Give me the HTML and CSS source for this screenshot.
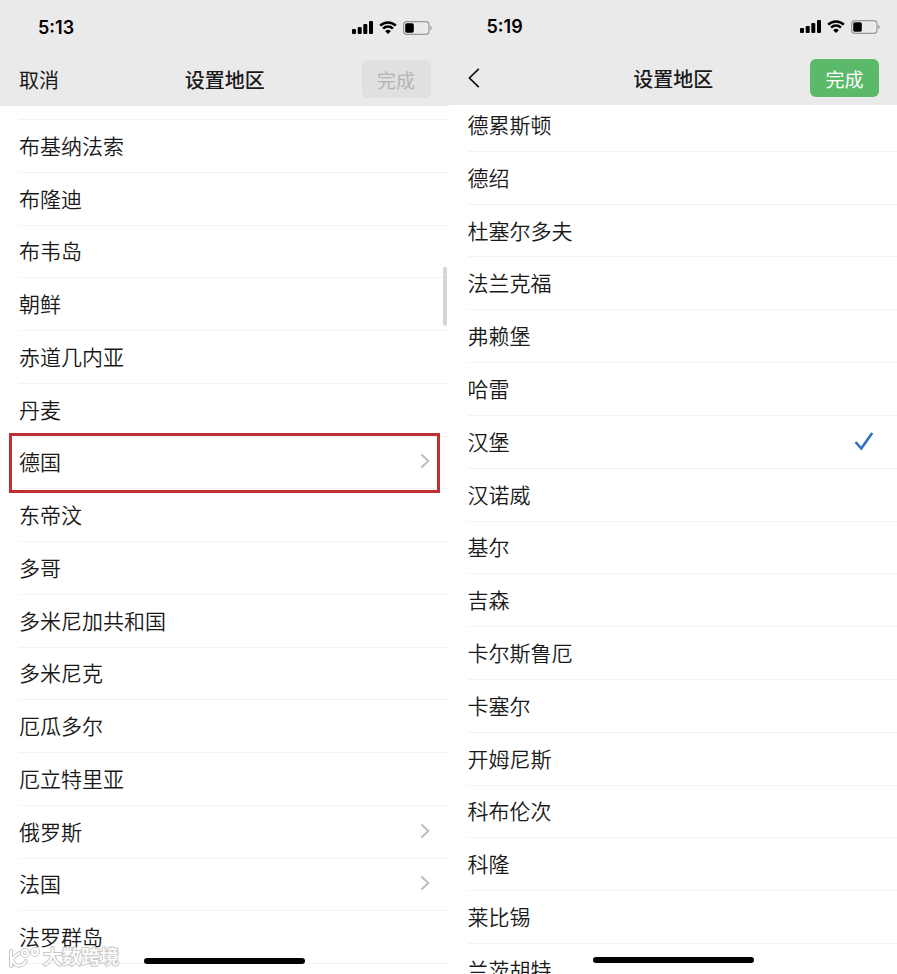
FILE: index.html
```html
<!DOCTYPE html>
<html lang="zh-CN">
<head>
    <meta charset="UTF-8">
    <meta name="viewport" content="width=device-width, initial-scale=1.0">
    <title>设置地区</title>
    <link rel="stylesheet" href="styles.css">
</head>

<body>

    <!-- shared icons -->
    <svg class="sprite" aria-hidden="true">
        <symbol id="signal" viewBox="0 0 21 13">
            <rect x="0" y="8" width="4" height="5" rx="1"/>
            <rect x="5.7" y="6" width="4" height="7" rx="1"/>
            <rect x="11.3" y="3" width="4" height="10" rx="1"/>
            <rect x="17" y="0" width="4" height="13" rx="1"/>
        </symbol>
        <symbol id="wifi" viewBox="0 0 18 13">
            <path d="M1.2 4.6a11.2 11.2 0 0 1 15.6 0M4.1 7.6a7 7 0 0 1 9.8 0" fill="none" stroke="#000" stroke-width="2.5"/>
            <path d="M9 13 6.2 10.2a4 4 0 0 1 5.6 0z"/>
        </symbol>
        <symbol id="battery" viewBox="0 0 29 14">
            <rect x=".6" y=".6" width="25.4" height="12.8" rx="3.4" fill="none" stroke="#999" stroke-width="1.2"/>
            <rect x="2.2" y="2.3" width="8.6" height="9.4" rx="1.6"/>
            <path d="M27.3 4.8c1.8.7 1.8 3.7 0 4.4z" fill="#999"/>
        </symbol>
        <symbol id="chevron" viewBox="0 0 10 16">
            <path d="M1.5 1.5 8.3 8l-6.8 6.5" fill="none" stroke="#bcbcbc" stroke-width="1.9"/>
        </symbol>
    </svg>

    <main class="screens">

        <section class="screen">
            <header class="top">
                <div class="status">
                    <span class="time">5:13</span>
                    <svg class="signal"><use href="#signal"/></svg>
                    <svg class="wifi"><use href="#wifi"/></svg>
                    <svg class="battery"><use href="#battery"/></svg>
                </div>
                <div class="nav">
                    <button class="cancel" type="button">取消</button>
                    <h1>设置地区</h1>
                    <button class="done" type="button" disabled>完成</button>
                </div>
            </header>
            <ul class="list countries">
                <li class="part"></li>
                <li><button type="button">布基纳法索</button></li>
                <li><button type="button">布隆迪</button></li>
                <li><button type="button">布韦岛</button></li>
                <li><button type="button">朝鲜</button></li>
                <li><button type="button">赤道几内亚</button></li>
                <li><button type="button">丹麦</button></li>
                <li class="marked"><button type="button">德国<svg class="chevron"><use href="#chevron"/></svg></button></li>
                <li><button type="button">东帝汶</button></li>
                <li><button type="button">多哥</button></li>
                <li><button type="button">多米尼加共和国</button></li>
                <li><button type="button">多米尼克</button></li>
                <li><button type="button">厄瓜多尔</button></li>
                <li><button type="button">厄立特里亚</button></li>
                <li><button type="button">俄罗斯<svg class="chevron"><use href="#chevron"/></svg></button></li>
                <li><button type="button">法国<svg class="chevron"><use href="#chevron"/></svg></button></li>
                <li><button type="button">法罗群岛</button></li>
                <li class="part last"></li>
            </ul>
            <div class="scrollbar"></div>
            <div class="home-bar"></div>
            <div class="watermark">
                <svg viewBox="0 0 34 22" aria-hidden="true">
                    <g fill="none" stroke-linecap="round" stroke-linejoin="round">
                        <path class="mark-edge" d="M4 4v15M12 6 5 12c2 8 10 9 14 2M15 6a3 3 0 1 0 6 0 3 3 0 1 0-6 0M25 5a3 3 0 1 0 6 0 3 3 0 1 0-6 0"/>
                        <path class="mark-fill" d="M4 4v15M12 6 5 12c2 8 10 9 14 2M15 6a3 3 0 1 0 6 0 3 3 0 1 0-6 0M25 5a3 3 0 1 0 6 0 3 3 0 1 0-6 0"/>
                    </g>
                </svg>
                <span>大数跨境</span>
            </div>
        </section>

        <section class="screen city">
            <header class="top">
                <div class="status">
                    <span class="time">5:19</span>
                    <svg class="signal"><use href="#signal"/></svg>
                    <svg class="wifi"><use href="#wifi"/></svg>
                    <svg class="battery"><use href="#battery"/></svg>
                </div>
                <div class="nav">
                    <button class="back" type="button" aria-label="返回">
                        <svg viewBox="0 0 12 20"><path d="M10.8.8 1.4 10l9.4 9.2" fill="none" stroke="#111" stroke-width="1.7"/></svg>
                    </button>
                    <h1>设置地区</h1>
                    <button class="done" type="button">完成</button>
                </div>
            </header>
            <ul class="list cities">
                <li><label>德累斯顿<input type="radio" name="city"></label></li>
                <li><label>德绍<input type="radio" name="city"></label></li>
                <li><label>杜塞尔多夫<input type="radio" name="city"></label></li>
                <li><label>法兰克福<input type="radio" name="city"></label></li>
                <li><label>弗赖堡<input type="radio" name="city"></label></li>
                <li><label>哈雷<input type="radio" name="city"></label></li>
                <li><label>汉堡<input type="radio" name="city" checked><svg class="check" viewBox="0 0 20 20"><path d="m1.5 11 5.8 6.5L18.2 2" fill="none" stroke="#2f6fc4" stroke-width="2.6"/></svg></label></li>
                <li><label>汉诺威<input type="radio" name="city"></label></li>
                <li><label>基尔<input type="radio" name="city"></label></li>
                <li><label>吉森<input type="radio" name="city"></label></li>
                <li><label>卡尔斯鲁厄<input type="radio" name="city"></label></li>
                <li><label>卡塞尔<input type="radio" name="city"></label></li>
                <li><label>开姆尼斯<input type="radio" name="city"></label></li>
                <li><label>科布伦次<input type="radio" name="city"></label></li>
                <li><label>科隆<input type="radio" name="city"></label></li>
                <li><label>莱比锡<input type="radio" name="city"></label></li>
                <li class="last"><label>兰茨胡特<input type="radio" name="city"></label></li>
            </ul>
            <div class="home-bar"></div>
        </section>

    </main>

</body>
</html>
```

FILE: styles.css
```css
* {
    box-sizing: border-box;
}
body {
    margin: 0;
    background: #fff;
    color: #191919;
    font-family: Inter, "Noto Sans CJK SC", sans-serif;
    font-size: 20px;
}
h1 {
    margin: 0;
    font-size: 20px;
    font-weight: 500;
    text-align: center;
}
button {
    padding: 0;
    border: 0;
    background: none;
    color: inherit;
    font: inherit;
}
.sprite {
    display: none;
}
.screens {
    display: grid;
    grid-template-columns: 1fr 1fr;
    height: 100vh;
    min-height: 700px;
}
.screen {
    position: relative;
    display: flex;
    flex-direction: column;
    min-height: 0;
    overflow: hidden;
}

/* header */
.top {
    z-index: 1;
    background: #eaeaea;
}
.status {
    display: flex;
    align-items: center;
    height: 53px;
    padding: 2px 17px 0 38px;
    color: #000;
}
.city .status {
    height: 52px;
    padding-top: 1px;
}
.time {
    margin-right: auto;
    font-size: 18px;
    font-weight: 600;
}
.signal {
    width: 21px;
    height: 13px;
    margin-right: 6px;
}
.wifi {
    width: 18px;
    height: 13px;
    margin-right: 6px;
}
.battery {
    width: 29px;
    height: 14px;
}
.nav {
    display: grid;
    grid-template-columns: 69px 1fr 69px;
    align-items: center;
    height: 53px;
    padding: 0 18px 1px 19px;
}
.cancel, .back {
    justify-self: start;
}
.back svg {
    display: block;
    width: 12px;
    height: 20px;
}
.done {
    height: 38px;
    border-radius: 6px;
    background: #5bba69;
    color: #fff;
    font-size: 19px;
}
.done:disabled {
    background: #e0e0e0;
    color: #b4b4b4;
}

/* lists */
.list {
    display: grid;
    flex: 1;
    margin: 0;
    padding: 0 0 0 19px;
    font-size: 21px;
    font-weight: 350;
    list-style: none;
}
.countries {
    grid-template-rows: 14px repeat(16, 1fr) 10px;
}
.cities {
    grid-template-rows: repeat(16, 1fr) 30px;
    margin-top: -6px;
}
.list li {
    display: grid;
    min-height: 0;
    border-bottom: 1px solid #f3f3f3;
}
.list .last {
    border-bottom: 0;
}
.list button, .list label {
    display: flex;
    align-items: center;
    justify-content: space-between;
    padding-bottom: 2px;
    text-align: left;
}
.cities .last label {
    align-items: flex-start;
    padding-top: 10px;
}
.list input {
    appearance: none;
    width: 0;
    height: 0;
    margin: 0;
}
.chevron {
    width: 10px;
    height: 16px;
    margin-right: 19px;
}
.check {
    width: 20px;
    height: 20px;
    margin-right: 23px;
}
.marked {
    position: relative;
}
.marked::after {
    content: "";
    position: absolute;
    inset: -4px 9px -5px -10px;
    border: 3px solid #be2f36;
    pointer-events: none;
}

/* overlays */
.scrollbar {
    position: absolute;
    top: 267px;
    right: 2px;
    width: 4px;
    height: 59px;
    border-radius: 2px;
    background: #d6d6d6;
}
.home-bar {
    position: absolute;
    bottom: 10px;
    left: 50%;
    width: 161px;
    height: 6px;
    margin-left: -80px;
    border-radius: 3px;
    background: #000;
}
.city .home-bar {
    bottom: 11px;
}
.watermark {
    position: absolute;
    bottom: 3px;
    left: 7px;
    display: flex;
    align-items: center;
    gap: 2px;
    color: #fff;
    font-size: 19px;
    font-weight: 500;
    line-height: 26px;
    -webkit-text-stroke: 2px #c9c9c9;
    paint-order: stroke fill;
}
.watermark svg {
    width: 34px;
    height: 22px;
}
.mark-edge {
    stroke: #c9c9c9;
    stroke-width: 4px;
}
.mark-fill {
    stroke: #fff;
    stroke-width: 2px;
}
```
